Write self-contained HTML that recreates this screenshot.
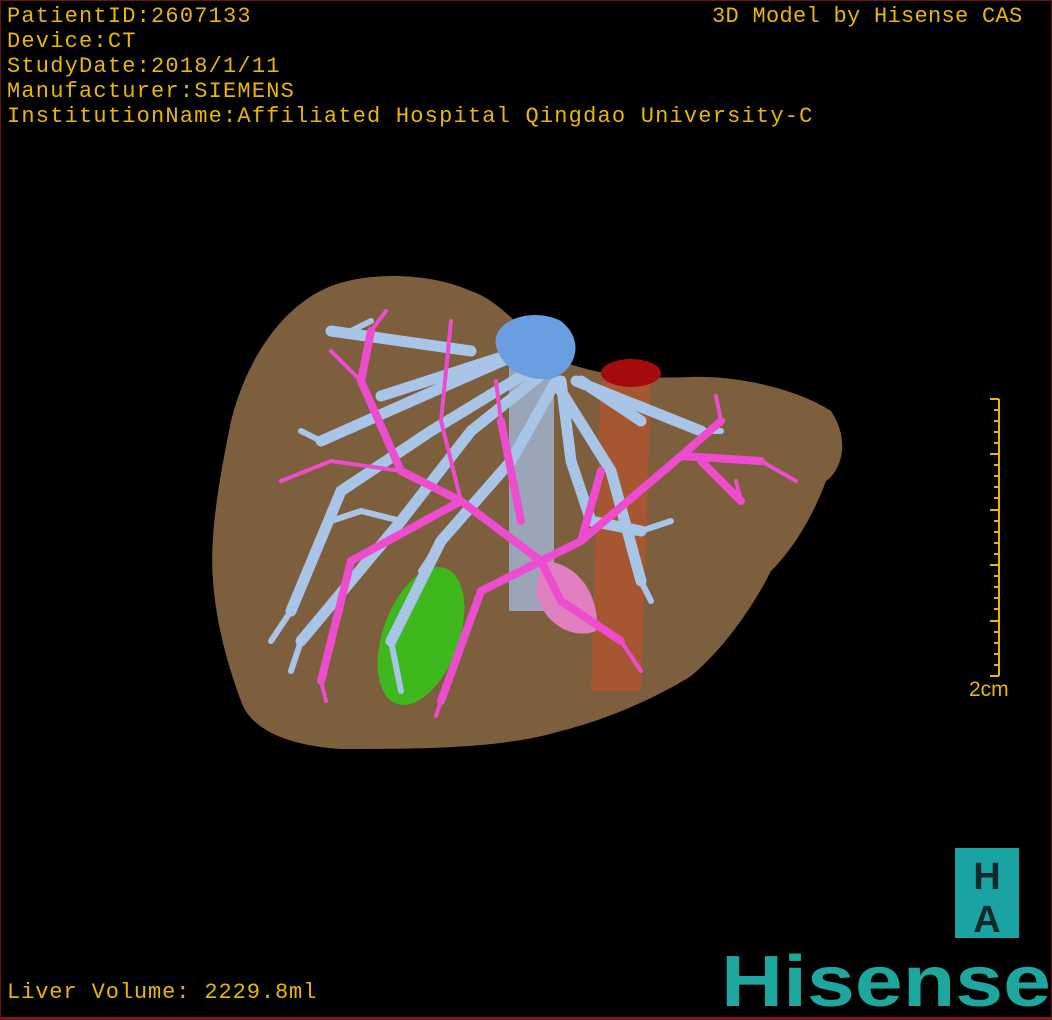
<!DOCTYPE html>
<html><head><meta charset="utf-8"><style>
html,body{margin:0;padding:0;background:#000;}
.wrap{position:relative;width:1052px;height:1020px;background:#000;overflow:hidden;box-sizing:border-box;border:1px solid #6a1414;border-bottom:3px solid #7a1a1a;}
.t{position:absolute;color:#e8b800;font-family:"Liberation Mono","DejaVu Sans Mono",monospace;font-size:22px;line-height:25px;white-space:pre;letter-spacing:1.2px;}
</style></head><body><div class="wrap">
<div class="t" style="left:6px;top:3px">PatientID:2607133
Device:CT
StudyDate:2018/1/11
Manufacturer:SIEMENS
InstitutionName:Affiliated Hospital Qingdao University-C</div>
<div class="t" style="left:711px;top:3px;letter-spacing:0.3px">3D Model by Hisense CAS</div>
<div class="t" style="left:6px;top:979px;letter-spacing:0.9px">Liver Volume: 2229.8ml</div>
<div class="t" style="left:968px;top:676px;font-family:'Liberation Sans',sans-serif;font-size:21px;letter-spacing:0">2cm</div>
<svg width="1052" height="1020" style="position:absolute;left:0;top:0" xmlns="http://www.w3.org/2000/svg">
<path d="M330 285 C370 270 430 272 470 290 C500 300 520 330 560 360 C600 375 640 378 690 376 C740 374 800 390 830 410 C850 440 840 470 825 480 C810 520 790 550 770 570 C750 610 720 650 690 675 C650 700 600 720 560 730 C500 748 420 748 340 748 C290 745 250 730 240 700 C225 660 215 620 212 580 C208 530 220 470 230 420 C245 360 280 305 330 285 Z" fill="#7d5f3e"/>
<path d="M600 380 L650 380 L640 690 L590 690 Z" fill="#b8542c" opacity="0.7"/>
<ellipse cx="630" cy="372" rx="30" ry="14" fill="#a40c0c"/>
<rect x="508" y="360" width="45" height="250" fill="#9aa6b8"/>
<ellipse cx="420" cy="635" rx="38" ry="72" transform="rotate(20 420 635)" fill="#3eb81c"/>
<path d="M540 560 C580 560 600 600 595 630 C570 640 540 620 535 590 Z" fill="#e080c0"/>
<g fill="none" stroke="#a8c4e6" stroke-linecap="round">
<path d="M535 345 L380 395 M535 345 L320 440 M330 330 L470 350 M545 360 L430 430 L340 490 L290 610 M545 370 L470 430 L400 520 L300 640 M555 380 L510 460 L440 540 L390 640 M560 380 L570 460 L590 520 L640 530 M560 390 L610 470 L640 580 M575 380 L700 430 M580 380 L640 420" stroke-width="11"/>
<path d="M290 610 L270 640 M300 640 L290 670 M390 640 L400 690 M440 540 L420 570 M640 580 L650 600 M640 530 L670 520 M400 520 L360 510 L330 520 M320 440 L300 430 M700 430 L720 430 M350 330 L370 320" stroke-width="6"/>
</g>
<path d="M495 345 C490 320 530 305 560 320 C585 340 575 370 550 378 C520 380 500 365 495 345 Z" fill="#6a9ee0"/>
<g fill="none" stroke="#ee4ccf" stroke-linecap="round">
<path d="M540 560 L580 540 L680 455 L760 460 M540 560 L460 500 L400 470 L360 380 L370 330 M540 560 L560 600 L620 640 M540 560 L480 590 L440 700 M520 520 L500 420 M460 500 L350 560 L320 680 M580 540 L600 470 M680 455 L720 420 M700 460 L740 500" stroke-width="8"/>
<path d="M760 460 L795 480 M720 420 L715 395 M740 500 L735 480 M400 470 L330 460 L280 480 M360 380 L330 350 M370 330 L385 310 M500 420 L495 380 M320 680 L325 700 M440 700 L435 715 M620 640 L640 670 M460 500 L440 420 L450 320" stroke-width="4"/>
</g>
<g stroke="#e8b800" stroke-width="2">
<line x1="998" y1="398" x2="998" y2="675"/>
<line x1="989" y1="398" x2="998" y2="398"/><line x1="989" y1="453" x2="998" y2="453"/><line x1="989" y1="509" x2="998" y2="509"/><line x1="989" y1="564" x2="998" y2="564"/><line x1="989" y1="620" x2="998" y2="620"/><line x1="989" y1="675" x2="998" y2="675"/>
<path d="M993 409h5M993 420h5M993 431h5M993 442h5M993 464h5M993 475h5M993 486h5M993 497h5M993 520h5M993 531h5M993 542h5M993 553h5M993 575h5M993 586h5M993 597h5M993 608h5M993 631h5M993 642h5M993 653h5M993 664h5"/>
</g>
<rect x="954" y="847" width="64" height="90" fill="#1aa3a3"/>
<text x="986" y="888" text-anchor="middle" font-family="Liberation Sans,sans-serif" font-weight="bold" font-size="38" fill="#0d2a2a">H</text>
<text x="986" y="931" text-anchor="middle" font-family="Liberation Sans,sans-serif" font-weight="bold" font-size="38" fill="#0d2a2a">A</text>
<text x="720" y="1005" font-family="Liberation Sans,sans-serif" font-weight="bold" font-size="72" fill="#1ea79e" textLength="330" lengthAdjust="spacingAndGlyphs">Hisense</text>
</svg>
</div></body></html>
